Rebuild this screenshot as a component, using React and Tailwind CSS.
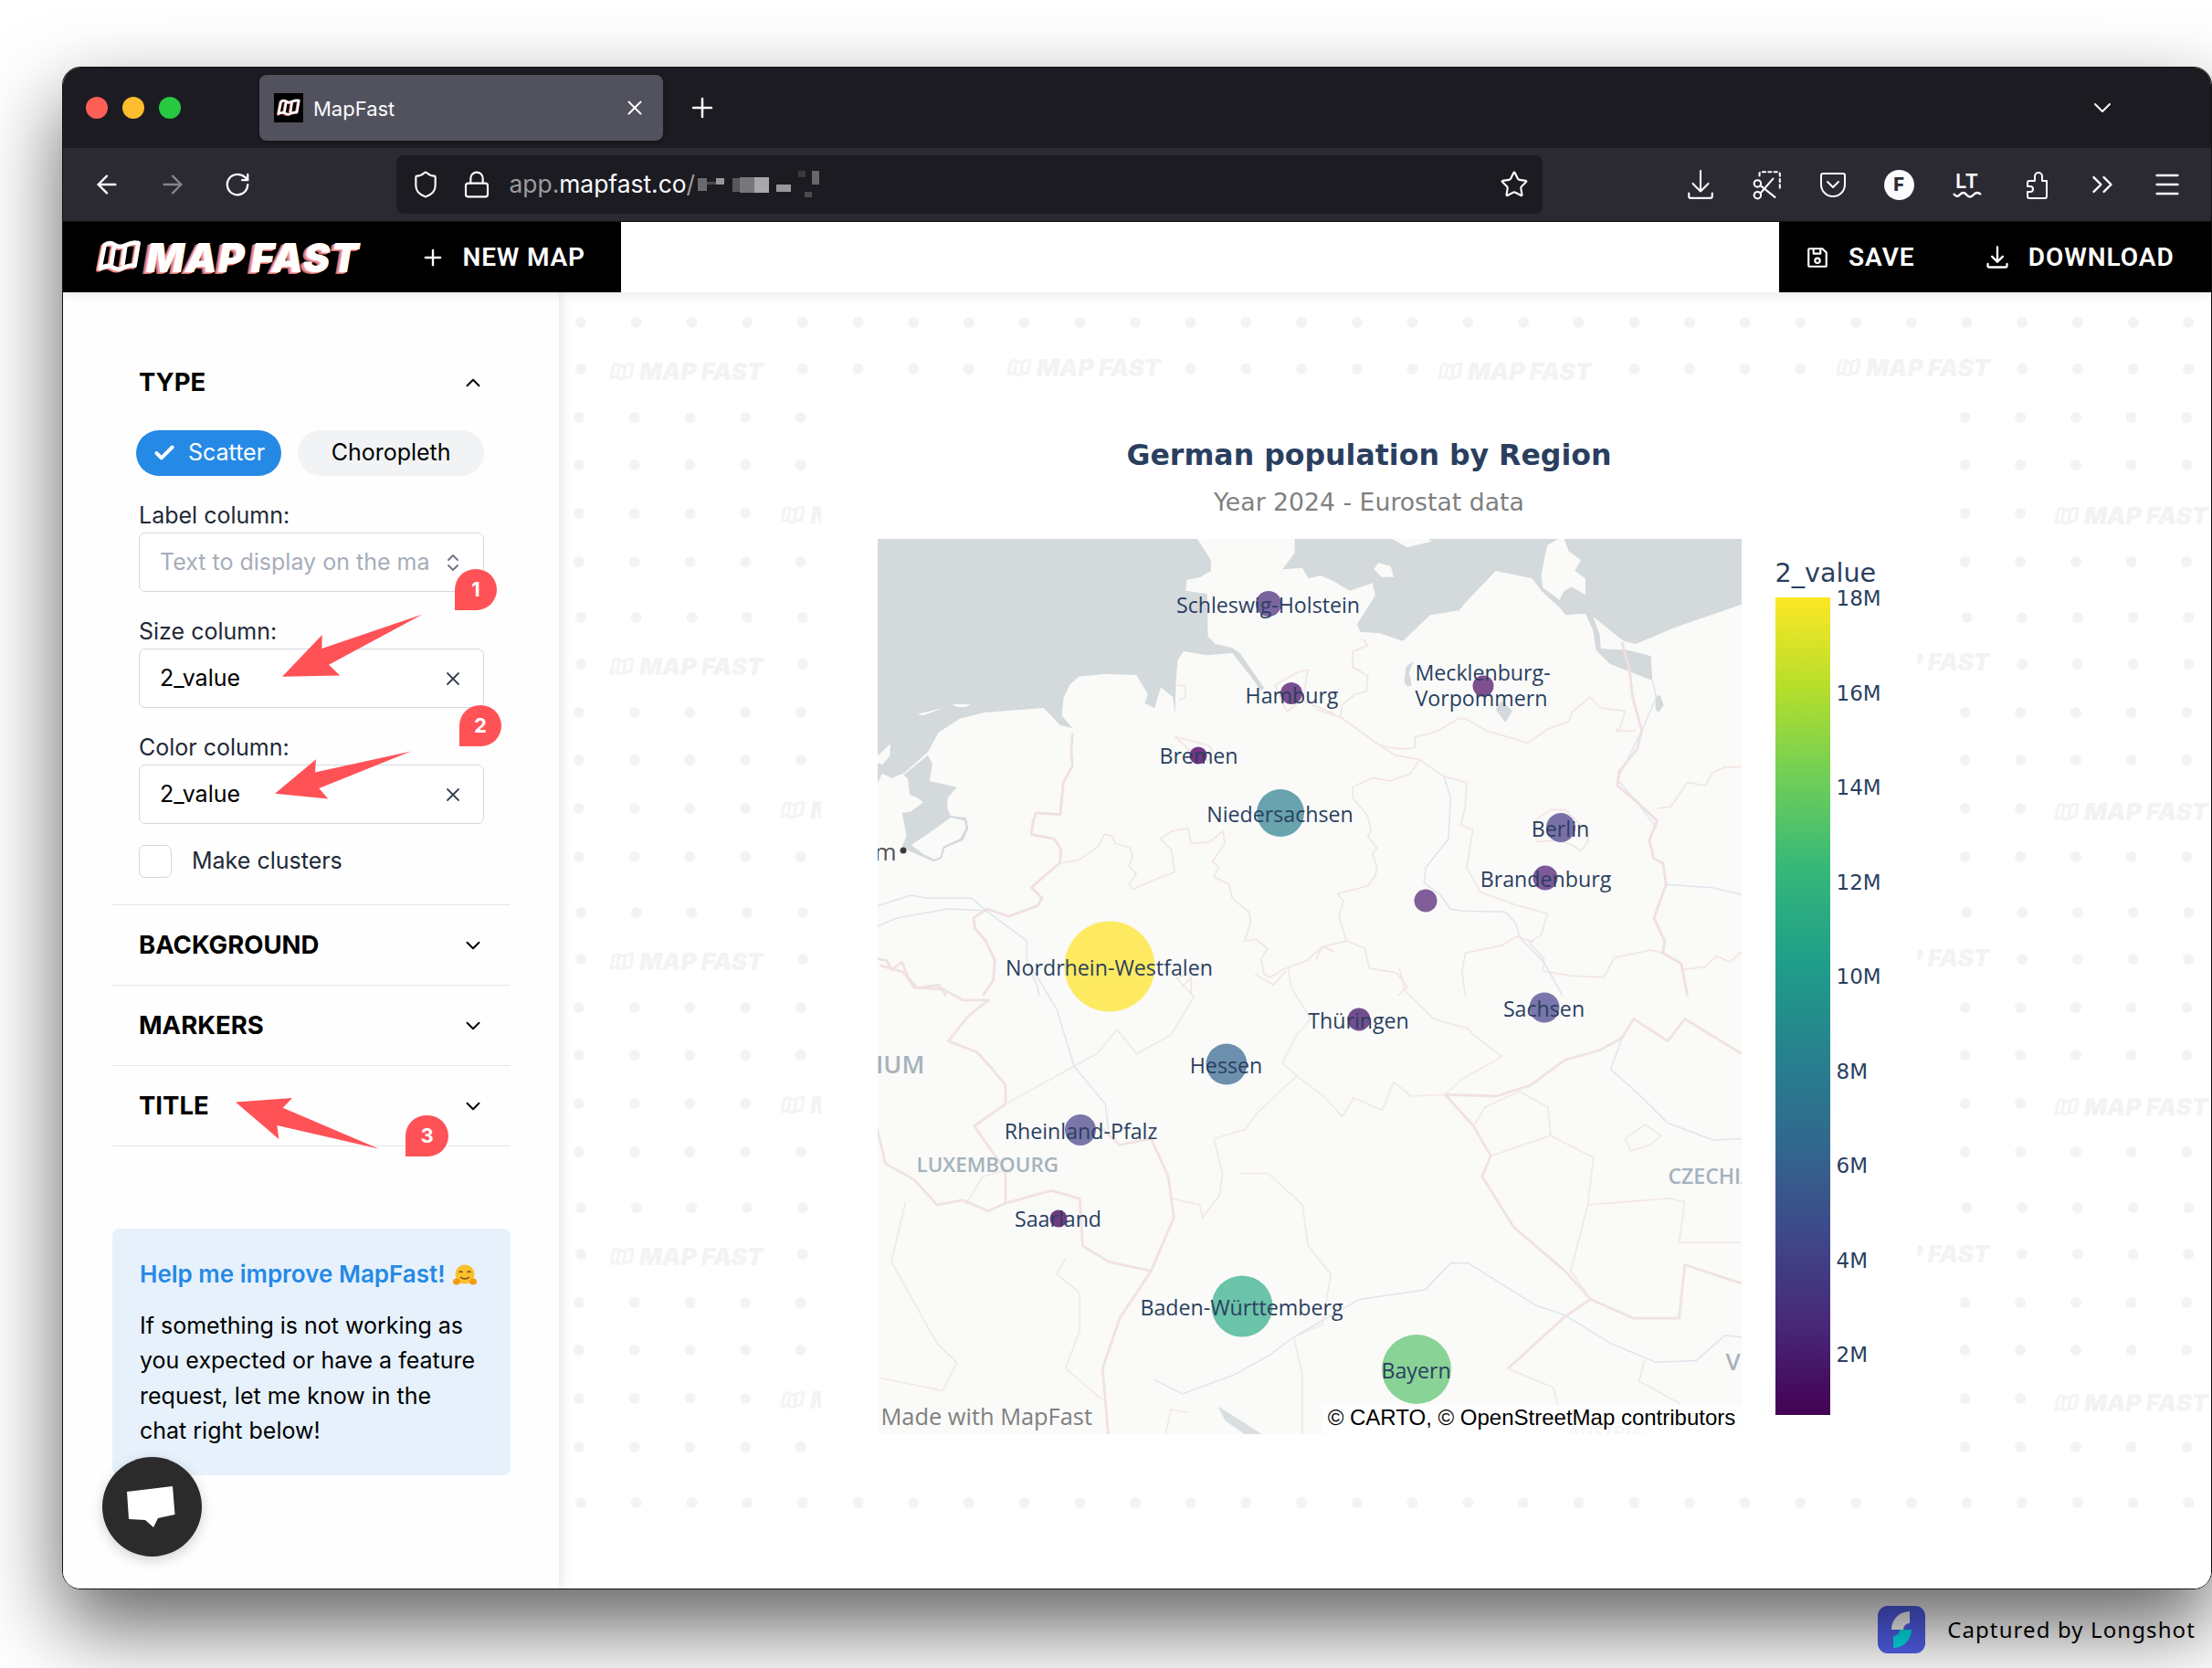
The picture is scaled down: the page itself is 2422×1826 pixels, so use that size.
import { useState } from 'react'
import { ArrowLeft, ArrowRight, RotateCw, Shield, Lock, Star, ChevronsRight, Menu, Plus, X, ChevronDown, ChevronUp, ChevronsUpDown, Check } from 'lucide-react'

const sea = '0,0 1050,0 1095,70 1095,105 1060,125 1015,135 1012,170 1082,180 1085,320 1110,345 1165,358 1190,375 1270,490 1258,498 1225,450 1165,375 1080,382 1005,368 985,400 980,470 977,575 970,520 930,487 910,555 877,540 888,510 850,447 750,443 660,452 630,480 610,525 605,580 640,622 600,612 545,555 350,570 270,590 200,635 165,700 85,770 45,785 15,770 0,800'
const seaLand = [
  '0,712 42,672 40,712 15,742 0,735',
  '130,575 215,555 150,580',
  '245,543 305,543 290,552 260,552',
  '110,1005 170,965 240,915 285,925 290,950 270,985 215,1010 205,1045 185,1052 150,1035',
]
const inland = '85,775 165,710 180,740 170,795 260,815 230,850 228,885 240,910 290,915 298,950 280,990 220,1015 210,1050 185,1060 150,1045 105,1025 80,1010 95,975 80,900 110,895 150,865 130,850 105,840 100,790'
const baltic = '-70,0 -70,45 -110,100 -45,95 -25,130 15,120 60,140 110,170 185,145 195,185 135,280 145,305 210,310 285,335 375,250 470,235 490,210 590,105 710,130 740,170 800,225 820,250 885,245 910,300 920,365 965,410 1105,465 1100,385 1025,365 935,360 932,315 910,255 1010,335 1050,345 1180,290 1398,215 1398,0'
const balticLand = [
  '250,0 300,28 380,8 370,0',
  '190,100 205,78 245,90 255,125 215,125',
  '760,20 795,0 815,0 830,40 870,70 850,105 885,130 885,183 840,158 815,170 800,200 745,160 740,120 750,65',
]
const lakes = [
  '295,420 320,402 305,440 315,480 300,485 290,470',
  '590,560 610,530 645,565 622,602',
  '1115,520 1130,512 1142,545 1125,570 1115,560',
]

const thin10 = [
  '598,1065 660,1055 725,1010 745,970 770,975 780,1000 830,1015 838,1045 825,1075 850,1100 825,1135 840,1150 920,1115 975,1095 965,1020 928,985 965,960 1020,950 1030,1000 1090,995 1135,960 1140,1000 1100,1060 1120,1075 1105,1110 1155,1135 1165,1180 1220,1225 1225,1260 1205,1320 1245,1315 1280,1345 1260,1380 1270,1430 1290,1440 1330,1415 1410,1385 1460,1340 1500,1355',
  '977,650 1020,660 1090,680 1100,700 1085,730 1040,710 1010,680 977,650',
  '985,480 1010,482 1012,520 990,530',
  '1305,480 1385,435 1413,430 1405,480 1395,530 1430,545 1500,575',
  '1305,480 1330,540 1345,565 1395,530',
  '1000,1470 1030,1440 1030,1500',
  '1240,1430 1300,1465 1340,1420',
]
const thick10 = [
  '640,638 636,700 640,745 610,800 600,905 520,900 510,930 505,970 580,985 603,1020 598,1065 550,1105 505,1145 540,1180 525,1205 430,1240 360,1215 315,1245 320,1280 355,1320 385,1385 380,1450 345,1500',
  '0,1380 30,1385 45,1415 80,1390 100,1440 130,1475 200,1465 225,1500',
]
const river10 = [
  '0,1205 110,1170 160,1180 310,1180 355,1220 490,1320 490,1390 525,1470 530,1500',
  '0,1272 65,1245 230,1215 355,1220',
]
const thin11 = [
  '0,560 80,585 205,675 260,710 340,725 420,780 495,800 490,880 475,940 515,955 495,1080 540,1160 650,1200 760,1230 740,1300 700,1325 750,1380 745,1420',
  '155,330 170,350 120,370 120,420 170,450 165,500 130,510 85,545 80,585',
  '205,675 240,685 285,690 325,685 325,650 370,640 400,630 470,590 490,590 560,630 630,650 695,670 760,625 830,600 840,570 900,520 935,555 1015,565 1000,620 985,630 1050,630',
  '340,725 310,770 245,795 185,785 120,815 120,850 170,910 180,960 170,975 200,1015 185,1035 200,1075 195,1105 170,1140 70,1165 90,1190 75,1240 100,1320 160,1345 175,1410 265,1425 300,1470 270,1500',
  '750,1420 840,1435 945,1440 980,1375 1100,1350 1140,1360',
  '1205,1415 1280,1405 1315,1370 1360,1390 1398,1355',
  '1120,885 1165,880 1220,800 1280,810 1300,770 1340,750 1398,748',
  '100,1320 20,1340 0,1380',
  '490,1360 610,1335 660,1305 715,1325',
  '490,1360 480,1420 490,1500',
  '725,920 770,890 820,890 890,960 895,990 870,1025 840,1005 790,990 725,995 720,960 725,920',
]
const thick11 = ['1005,340 1030,430 1040,520 1070,630 1055,690 995,765 990,810 1050,860 1120,925 1095,990 1110,1050 1140,1065 1150,1135 1110,1245 1145,1320 1140,1360 1200,1395 1220,1500']
const river11 = [
  '420,780 442,850 435,985 360,1080 355,1130 410,1170 440,1215 480,1222 620,1225 655,1260 670,1310 745,1385 810,1500',
  '1105,465 1118,520 1070,630 990,790 1050,860 1120,950',
  '1150,1135 1300,1145 1398,1168',
]
const thin6 = [
  '240,460 300,400 360,340 400,300 435,225 470,300 530,240 570,120 540,60 600,20',
  '750,370 725,330 750,240 775,190 740,90 735,30',
  '605,570 660,540 680,490 750,370 800,440 830,500 850,440 900,480 920,390 950,435 1010,430',
  '605,570 620,680 615,750 585,820 580,780 530,760',
  '650,680 700,680 760,780 770,910 810,1000 795,1160 745,1200 760,1320 760,1510',
  '1010,430 1040,380 1110,310 1060,240 1050,220 990,190 940,100 930,30',
  '1060,530 1080,470 1140,420 1190,470 1195,560 1090,625',
  '1195,560 1270,630 1260,780 1400,760 1430,770 1420,900 1450,900 1530,900',
  '1260,780 1230,990 1265,1080',
  '1325,570 1360,525 1388,560 1370,590 1335,608 1325,570',
  '65,770 40,960 120,1220 155,1280 130,1370 20,1330',
  '240,670 200,690 170,780',
  '345,950 330,1000 370,1060 370,1180 345,1300 410,1400',
  '560,1440 530,1430 520,1510',
  '1120,1300 1200,1360 1220,1510',
  '1360,1270 1350,1340 1420,1410 1440,1510',
]
const thick6 = [
  '15,540 30,650 80,700 120,780 165,765 210,800 240,775 320,735 370,760 375,910 420,960 495,990 535,820 525,690 495,570 440,590 410,540',
  '495,990 440,1140 410,1300 420,1510',
  '20,20 60,40 80,90 130,95 165,130 210,130 175,180 140,260 190,295 215,345 240,400 240,460 185,530 220,620 240,670 240,775',
  '1010,430 1030,470 1060,530 1090,625 1075,690 1130,850 1220,990 1265,1080 1220,1135 1120,1300',
  '1265,1080 1340,1140 1420,1140 1430,970 1530,1030',
  '1160,400 1220,320 1280,290 1320,250 1340,190 1400,260 1430,190 1530,300',
  '1010,430 1100,435 1160,400',
]
const river6 = [
  '500,1335 550,1380 640,1320 700,1260 745,1200 860,1080 975,1050 1020,965 1050,965 1170,1100 1220,1130 1300,1220 1380,1280 1450,1275 1500,1195 1530,1200',
  '1530,570 1480,575 1400,520 1350,430 1300,350 1320,250',
  '290,40 330,160 360,340 415,460 420,540',
]

const markers = [
  { x: 428, y: 71, d: 28, c: '#7b65a0' },
  { x: 663, y: 161, d: 23, c: '#7e5090' },
  { x: 453, y: 169, d: 24, c: '#7a4d90' },
  { x: 351, y: 237, d: 19, c: '#733683' },
  { x: 441, y: 300, d: 52, c: '#68a3ae' },
  { x: 748, y: 316, d: 32, c: '#7a70a8' },
  { x: 731, y: 371, d: 27, c: '#7d5a99' },
  { x: 600, y: 396, d: 25, c: '#7f5e99' },
  { x: 254, y: 468, d: 99, c: '#fdea61' },
  { x: 527, y: 526, d: 25, c: '#724e8c' },
  { x: 730, y: 513, d: 33, c: '#7876aa' },
  { x: 382, y: 575, d: 45, c: '#6c90ae' },
  { x: 222, y: 647, d: 34, c: '#7a76a8' },
  { x: 198, y: 744, d: 19, c: '#703a82' },
  { x: 399, y: 840, d: 67, c: '#6bc3a9' },
  { x: 590, y: 909, d: 76, c: '#88d395' },
]

const labels = [
  { x: 428, y: 72, t: 'Schleswig-Holstein' },
  { x: 454, y: 171, t: 'Hamburg' },
  { x: 352, y: 237, t: 'Bremen' },
  { x: 441, y: 301, t: 'Niedersachsen' },
  { x: 748, y: 317, t: 'Berlin' },
  { x: 732, y: 372, t: 'Brandenburg' },
  { x: 254, y: 469, t: 'Nordrhein-Westfalen' },
  { x: 527, y: 527, t: 'Thüringen' },
  { x: 730, y: 514, t: 'Sachsen' },
  { x: 382, y: 576, t: 'Hessen' },
  { x: 223, y: 648, t: 'Rheinland-Pfalz' },
  { x: 198, y: 744, t: 'Saarland' },
  { x: 399, y: 841, t: 'Baden-Württemberg' },
  { x: 590, y: 910, t: 'Bayern' },
]

const ticks = ['18M', '16M', '14M', '12M', '10M', '8M', '6M', '4M', '2M']

const mosaic = [
  [0, 8, 10, 14, '#6a6a6e'], [10, 12, 10, 3, '#4a4a4e'], [20, 8, 9, 7, '#98989c'], [38, 8, 8, 15, '#58585c'],
  [46, 7, 16, 17, '#77777b'], [62, 7, 16, 17, '#a8a8ac'], [86, 15, 16, 8, '#98989c'], [110, 0, 8, 7, '#3a3a3e'],
  [125, 0, 8, 15, '#68686c'], [117, 23, 8, 6, '#4a4a4e'],
]

// watermark spots, coords relative to the main panel
const marks = [
  { x: 55, y: 87 }, { x: 490, y: 83 }, { x: 962, y: 87 }, { x: 1398, y: 83 },
  { x: 55, y: 410 }, { x: 55, y: 733 }, { x: 55, y: 1056 },
  { x: 1398, y: 405 }, { x: 1398, y: 729 }, { x: 1398, y: 1053 },
  { x: 242, y: 244 }, { x: 242, y: 567 }, { x: 242, y: 890 }, { x: 242, y: 1213 },
  { x: 1637, y: 245 }, { x: 1637, y: 569 }, { x: 1637, y: 892 }, { x: 1637, y: 1216 },
]

function makeDots() {
  const out = []
  const rows = [[33, 24], [84, 24], [137, 22], [189, 22], [242, 22], [295, 22]]
  for (let k = 0; k < 5; k++) {
    rows.forEach(([y, x0]) => {
      const cy = y + k * 323
      for (let i = 0; i < 31; i++) {
        const cx = x0 + i * 60.7
        const hit = marks.some((m) => cx > m.x - 16 && cx < m.x + 190 && Math.abs(cy - m.y) < 24)
        if (!hit && cy < 1360) out.push([cx, cy])
      }
    })
  }
  return out
}
const dots = makeDots()

function LogoIcon({ className, color = '#fff', shadow = '#f08a8a' }) {
  const outline = 'M9 5 C13 2 17 3 20 5 C24 8 28 7 32 5 C36 3 41 2 45 3 L41 27 C36 26 31 28 27 30 C23 32 19 30 16 28 C12 26 8 28 4 30 Z'
  return (
    <svg viewBox="0 0 48 36" className={className} fill="none" strokeWidth="4.6" strokeLinejoin="round">
      <g stroke={shadow} transform="translate(-2 1.5)">
        <path d={outline} />
        <path d="M19 7 L16 26 M31 7 L28 27" />
      </g>
      <path d={outline} stroke={color} />
      <path d="M19 7 L16 26 M31 7 L28 27" stroke={color} />
    </svg>
  )
}

function Watermark({ x, y }) {
  return (
    <div className="absolute flex items-center gap-[5px] -translate-y-1/2" style={{ left: x, top: y }}>
      <LogoIcon className="w-[28px] h-[22px]" color="#f4f4f4" shadow="#f8f8f8" />
      <span className="font-['Inter'] italic font-black text-[26px] leading-[30px] text-[#f3f3f3] whitespace-nowrap">MAP FAST</span>
    </div>
  )
}

function Section({ title }) {
  return (
    <div className="h-[88px] pt-[1px] border-b-[1.5px] border-[#e4e5e7] flex items-center justify-between pl-[29px] pr-[28px]">
      <span className="text-[27.5px] font-bold text-black">{title}</span>
      <ChevronDown className="w-[26px] h-[26px] text-black" strokeWidth={1.8} />
    </div>
  )
}

function FieldLabel({ children }) {
  return <div className="mt-[25px] h-[37px] leading-[36px] text-[25px] text-[#1f2937]">{children}</div>
}

function ValueInput() {
  return (
    <div className="h-[65px] border-[1.5px] border-[#d3d7dd] rounded-[7px] flex items-center justify-between pl-[22px] pr-[21px] bg-white">
      <span className="text-[25px] text-black">2_value</span>
      <X className="w-[24px] h-[24px] text-[#374151]" strokeWidth={1.8} />
    </div>
  )
}

function HugEmoji() {
  return (
    <svg viewBox="0 0 26 24" className="inline-block w-[26px] h-[24px] ml-[8px] align-[-4px]">
      <circle cx="13" cy="11" r="10.5" fill="#fbc02d" />
      <path d="M6.5 9 q2 -2.5 4 0 M15.5 9 q2 -2.5 4 0" stroke="#7a4a12" strokeWidth="1.4" fill="none" />
      <path d="M8 14 q5 4 10 0" stroke="#7a4a12" strokeWidth="1.4" fill="none" />
      <ellipse cx="4" cy="19" rx="4" ry="3.5" fill="#f39c12" />
      <ellipse cx="22" cy="19" rx="4" ry="3.5" fill="#f39c12" />
    </svg>
  )
}

function Polys({ items, stroke, width }) {
  return items.map((p, i) => (
    <polyline key={i} points={p} fill="none" stroke={stroke} strokeWidth={width} strokeLinejoin="round" vectorEffect="non-scaling-stroke" />
  ))
}

function ToolIcon({ children, className }) {
  return (
    <svg viewBox="0 0 32 32" className={className} fill="none" stroke="#fbfbfe" strokeWidth="2" strokeLinecap="round" strokeLinejoin="round">
      {children}
    </svg>
  )
}

function Map() {
  return (
    <div className="relative w-[946px] h-[980px] overflow-hidden bg-[#fafaf8] shrink-0 font-['Open_Sans']">
      <svg viewBox="0 0 946 980" className="absolute inset-0 w-full h-full">
        <g transform="scale(0.3333)">
          <polygon points={sea} fill="#d4d9dc" />
          <polygon points={inland} fill="#d4d9dc" />
          {seaLand.map((p, i) => <polygon key={i} points={p} fill="#fafaf8" />)}
          <Polys items={river10} stroke="#dde6eb" width={1.5} />
          <Polys items={thin10} stroke="#f2e4e4" width={1.6} />
          <Polys items={thick10} stroke="#f0e0e0" width={2.8} />
        </g>
        <g transform="translate(480 0) scale(0.3333)">
          <polygon points={baltic} fill="#d4d9dc" />
          {balticLand.map((p, i) => <polygon key={i} points={p} fill="#fafaf8" />)}
          {lakes.map((p, i) => <polygon key={i} points={p} fill="#d4d9dc" />)}
          <Polys items={river11} stroke="#dde6eb" width={1.5} />
          <Polys items={thin11} stroke="#f2e4e4" width={1.6} />
          <Polys items={thick11} stroke="#f0e0e0" width={2.8} />
        </g>
        <g transform="translate(-10 460) scale(0.625 0.3448)">
          <polygon points="612,1420 665,1480 690,1510 660,1510 625,1465" fill="#d9dee0" />
          <Polys items={river6} stroke="#dde6eb" width={1.5} />
          <Polys items={thin6} stroke="#f3e7e7" width={1.6} />
          <Polys items={thick6} stroke="#f1e2e2" width={2.8} />
        </g>
        <circle cx="28" cy="341" r="3.5" fill="#3a3a3a" />
        {markers.map((m, i) => <circle key={i} cx={m.x} cy={m.y} r={m.d / 2} fill={m.c} />)}
      </svg>

      <span className="absolute left-[-3px] top-[325px] text-[26px] leading-[34px] text-[#555]">m</span>
      <span className="absolute left-[-21px] top-[558px] text-[27px] leading-[34px] font-semibold text-[#a5b2bc]">GIUM</span>
      <span className="absolute left-[43px] top-[670px] text-[22.4px] leading-[30px] font-semibold text-[#a5b2bc]">LUXEMBOURG</span>
      <span className="absolute left-[866px] top-[682px] text-[23px] leading-[30px] font-semibold text-[#a5b2bc]">CZECHIA</span>
      <span className="absolute left-[929px] top-[883px] text-[26px] leading-[34px] font-semibold text-[#a5b2bc]">V</span>
      <span className="absolute left-[756px] top-[966px] text-[20px] leading-[24px] font-semibold text-[#c5ced6]">AUSTRIA</span>

      {labels.map((l) => (
        <div key={l.t} className="absolute -translate-x-1/2 -translate-y-1/2 whitespace-nowrap text-[23.2px] leading-[28px] text-[#2a3f5f]" style={{ left: l.x, top: l.y }}>
          {l.t}
        </div>
      ))}
      <div className="absolute left-[663px] top-[160px] -translate-x-1/2 -translate-y-1/2 text-left text-[23.2px] leading-[28px] text-[#2a3f5f]">
        Mecklenburg-<br />Vorpommern
      </div>

      <span className="absolute left-[4px] top-[945px] text-[25.4px] leading-[30px] text-[#7f7f7f]">Made with MapFast</span>
      <div className="absolute right-0 bottom-0 w-[459px] h-[32px] pb-[4px] bg-white/80 flex items-center justify-center font-['Liberation_Sans'] text-[24px] text-black whitespace-nowrap">
        © CARTO, © OpenStreetMap contributors
      </div>
    </div>
  )
}

export default function App() {
  const [type] = useState('scatter')

  return (
    <div className="relative w-[2422px] h-[1826px] overflow-hidden bg-white pt-[73px] pl-[68px] font-['Inter',sans-serif]">
      <div className="relative isolate w-[2354px] h-[1667px] rounded-[20px] overflow-hidden flex flex-col border-[1.5px] border-[#111] shadow-[0_40px_90px_rgba(0,0,0,0.62)]">
        {/* tab strip */}
        <div className="h-[88px] shrink-0 bg-[#1c1b22] flex items-center pl-[25px] pr-[103px]">
          <div className="flex gap-[16px] w-[190px]">
            <span className="w-[24px] h-[24px] rounded-full bg-[#ff5f57]" />
            <span className="w-[24px] h-[24px] rounded-full bg-[#febc2e]" />
            <span className="w-[24px] h-[24px] rounded-full bg-[#28c840]" />
          </div>
          <div className="w-[442px] h-[72px] bg-[#52525e] rounded-[8px] flex items-center pl-[16px] pr-[18px] shadow-[0_1px_4px_rgba(0,0,0,0.4)]">
            <div className="w-[32px] h-[32px] bg-black flex items-center justify-center">
              <LogoIcon className="w-[26px] h-[22px]" />
            </div>
            <span className="ml-[11px] pt-[2px] text-[22px] text-[#fbfbfe]">MapFast</span>
            <X className="ml-auto w-[26px] h-[26px] text-[#fbfbfe]" strokeWidth={1.8} />
          </div>
          <Plus className="ml-[26px] w-[34px] h-[34px] text-[#fbfbfe]" strokeWidth={1.8} />
          <ChevronDown className="ml-auto w-[32px] h-[32px] text-[#fbfbfe]" strokeWidth={1.5} />
        </div>

        {/* browser toolbar */}
        <div className="h-[81px] shrink-0 bg-[#2b2a33] border-b border-[#111] flex items-center pl-[32px]">
          <ArrowLeft className="w-[32px] h-[32px] text-[#fbfbfe]" strokeWidth={1.8} />
          <ArrowRight className="ml-[40px] w-[32px] h-[32px] text-[#85848b]" strokeWidth={1.8} />
          <RotateCw className="ml-[40px] w-[30px] h-[30px] text-[#fbfbfe]" strokeWidth={1.8} />
          <div className="ml-[158.5px] w-[1255px] h-[64px] rounded-[8px] bg-[#1c1b22] flex items-center pl-[16px] pr-[15px]">
            <Shield className="w-[32px] h-[32px] text-[#fbfbfe]" strokeWidth={1.6} />
            <Lock className="ml-[24px] w-[32px] h-[32px] text-[#fbfbfe]" strokeWidth={1.6} />
            <span className="ml-[20px] text-[26.4px] text-[#fbfbfe] whitespace-nowrap">
              <span className="text-[#9b9ba0]">app.</span>mapfast.co<span className="text-[#9b9ba0]">/</span>
            </span>
            <svg viewBox="0 0 134 30" className="w-[134px] h-[30px] ml-[3px]">
              {mosaic.map(([x, y, w, h, c], i) => <rect key={i} x={x} y={y} width={w} height={h} fill={c} />)}
            </svg>
            <Star className="ml-auto w-[32px] h-[32px] text-[#fbfbfe]" strokeWidth={1.6} />
          </div>
          <div className="flex items-center ml-[156px]">
            <ToolIcon className="w-[34px] h-[34px]">
              <path d="M16 2 V23 M8 15 L16 23 L24 15 M4 25 V28 a2 2 0 0 0 2 2 H26 a2 2 0 0 0 2 -2 V25" />
            </ToolIcon>
            <ToolIcon className="ml-[39px] w-[34px] h-[34px]">
              <path d="M8 7 V5 a2 2 0 0 1 2 -2 H27 a2 2 0 0 1 2 2 V19 a2 2 0 0 1 -2 2" strokeDasharray="3 3" />
              <circle cx="6" cy="15" r="3.5" />
              <circle cx="6" cy="27" r="3.5" />
              <path d="M9 17 L24 29 M9 25 L22 10" />
            </ToolIcon>
            <ToolIcon className="ml-[39px] w-[32px] h-[34px]">
              <path d="M5 4 H27 a2 2 0 0 1 2 2 V16 a13 13 0 0 1 -26 0 V6 a2 2 0 0 1 2 -2 Z M10 13 L16 19 L22 13" />
            </ToolIcon>
            <div className="ml-[40px] w-[33px] h-[33px] rounded-full bg-[#fbfbfe] flex items-center justify-center text-[20px] font-extrabold text-[#2b2a33]">F</div>
            <div className="ml-[42px] flex flex-col items-center w-[32px]">
              <span className="text-[22px] leading-[21px] font-semibold text-[#fbfbfe]">LT</span>
              <svg viewBox="0 0 32 8" className="w-[32px] h-[8px]" fill="none" stroke="#fbfbfe" strokeWidth="2.4">
                <path d="M1 3 q4 5 7 1 q4 -4 7 0 q4 5 8 0 q4 -4 8 0" />
              </svg>
            </div>
            <ToolIcon className="ml-[47px] w-[32px] h-[36px]">
              <path d="M11 7 a4 4 0 0 1 8 0 V12 h5 V29 a2 2 0 0 1 -2 2 H5 a2 2 0 0 1 -2 -2 V24 h3 a3 3 0 0 0 0 -6 H3 V14 a2 2 0 0 1 2 -2 h6 Z" />
            </ToolIcon>
            <ChevronsRight className="ml-[34px] w-[38px] h-[38px] text-[#fbfbfe]" strokeWidth={1.5} />
            <Menu className="ml-[35px] w-[34px] h-[34px] text-[#fbfbfe]" strokeWidth={1.8} />
          </div>
        </div>

        {/* app header */}
        <div className="relative z-20 h-[77px] shrink-0 bg-white flex justify-between shadow-[0_2px_12px_rgba(0,0,0,0.1)] font-['Roboto']">
          <div className="w-[611px] bg-black flex items-center pl-[36px]">
            <LogoIcon className="w-[50px] h-[37px]" />
            <span className="ml-[5px] font-['Inter'] text-[44px] leading-[50px] italic font-black text-white whitespace-nowrap tracking-[1px] [word-spacing:-4px] [text-shadow:-2px_1px_0_#f4a0a0,-4px_2px_0_#d46a6a]">MAP FAST</span>
            <Plus className="ml-[66px] w-[28px] h-[28px] text-white" strokeWidth={2} />
            <span className="ml-[19px] text-[28px] font-semibold text-white tracking-[0.8px] whitespace-nowrap">NEW MAP</span>
          </div>
          <div className="w-[473px] bg-black flex items-center pl-[29px]">
            <svg viewBox="0 0 24 24" className="w-[26px] h-[26px]" fill="none" stroke="#fff" strokeWidth="2" strokeLinejoin="round">
              <path d="M4 3 H17 L21 7 V20 a1 1 0 0 1 -1 1 H4 a1 1 0 0 1 -1 -1 V4 a1 1 0 0 1 1 -1 Z M8 3 V8 H15 V3" />
              <circle cx="12" cy="15" r="2.5" />
            </svg>
            <span className="ml-[21px] text-[28px] font-semibold text-white tracking-[1px]">SAVE</span>
            <svg viewBox="0 0 24 24" className="ml-[76px] w-[28px] h-[28px]" fill="none" stroke="#fff" strokeWidth="2" strokeLinecap="round" strokeLinejoin="round">
              <path d="M12 2 V16 M7 11 L12 16 L17 11 M3 18 V20 a1 1 0 0 0 1 1 H20 a1 1 0 0 0 1 -1 V18" />
            </svg>
            <span className="ml-[20px] text-[28px] font-semibold text-white tracking-[1px]">DOWNLOAD</span>
          </div>
        </div>

        <div className="flex-1 flex min-h-0">
          {/* sidebar */}
          <div className="relative z-10 w-[543px] shrink-0 bg-[#fefefe] pl-[54px] pr-[53px] pt-[55px] shadow-[0_0_14px_rgba(0,0,0,0.14)]">
            <div className="border-b-[1.5px] border-[#e4e5e7] pb-[28px]">
              <div className="h-[88px] flex items-center justify-between pl-[29px] pr-[28px]">
                <span className="text-[27.5px] font-bold text-black">TYPE</span>
                <ChevronUp className="w-[26px] h-[26px] text-black" strokeWidth={1.8} />
              </div>
              <div className="pl-[29px] pr-[29px]">
                <div className="mt-[8px] -ml-[3px] flex gap-[18px]">
                  <div className={`h-[50px] w-[160px] rounded-full flex items-center pl-[18px] gap-[13px] text-[25px] ${type === 'scatter' ? 'bg-[#2589e6] text-white' : 'bg-[#f2f3f5] text-black'}`}>
                    <Check className="w-[26px] h-[26px]" strokeWidth={3.6} />
                    Scatter
                  </div>
                  <div className="h-[50px] w-[205px] rounded-full bg-[#f2f3f5] flex items-center justify-center text-[25px] text-black">Choropleth</div>
                </div>
                <FieldLabel>Label column:</FieldLabel>
                <div className="h-[65px] border-[1.5px] border-[#d3d7dd] rounded-[7px] flex items-center justify-between pl-[22px] pr-[21px] bg-white">
                  <span className="text-[25px] text-[#a6aeb9] whitespace-nowrap">Text to display on the ma</span>
                  <ChevronsUpDown className="w-[24px] h-[24px] text-[#6b7280]" strokeWidth={1.8} />
                </div>
                <FieldLabel>Size column:</FieldLabel>
                <ValueInput />
                <FieldLabel>Color column:</FieldLabel>
                <ValueInput />
                <div className="mt-[22px] flex items-center gap-[22px]">
                  <span className="w-[36px] h-[36px] rounded-[7px] border-[1.5px] border-[#d3d7dd] bg-white" />
                  <span className="text-[25px] text-[#1f2937]">Make clusters</span>
                </div>
              </div>
            </div>
            <Section title="BACKGROUND" />
            <Section title="MARKERS" />
            <Section title="TITLE" />

            <div className="mt-[90px] rounded-[8px] bg-[#e6f1fc] pl-[30px] pr-[34px] pt-[32px] pb-[29px]">
              <div className="text-[26px] leading-[36px] font-semibold text-[#2589e6] whitespace-nowrap">
                Help me improve MapFast!<HugEmoji />
              </div>
              <p className="mt-[19px] text-[25px] leading-[38.5px] text-black">
                If something is not working as you expected or have a feature request, let me know in the chat right below!
              </p>
            </div>

            <button className="absolute left-[43px] bottom-[35px] w-[109px] h-[109px] rounded-full bg-[#2b2b2b] flex items-center justify-center shadow-[0_4px_14px_rgba(0,0,0,0.18)]">
              <svg viewBox="0 0 53 45" className="w-[53px] h-[45px] -ml-[3px]">
                <polygon points="0,6 50,0 52.5,31 34,35 29,45 20,37 2,36" fill="#fff" />
              </svg>
            </button>
          </div>

          {/* main panel */}
          <div className="relative flex-1 bg-white pl-[287px] pt-[110px] overflow-hidden">
            <svg className="absolute inset-0 w-full h-full">
              {dots.map(([x, y], i) => <circle key={i} cx={x} cy={y} r="6" fill="#f3f3f3" />)}
            </svg>
            {marks.map((m, i) => <Watermark key={i} x={m.x} y={m.y} />)}

            <div className="relative w-[1200px] h-[1200px] bg-white pt-[48px]">
              <div className="text-center font-['DejaVu_Sans'] font-bold text-[31.6px] leading-[40px] text-[#2a3f5f]">German population by Region</div>
              <div className="mt-[14px] text-center font-['DejaVu_Sans'] text-[26.7px] leading-[36px] text-[#7f7f7f]">Year 2024 - Eurostat data</div>
              <div className="mt-[22px] ml-[61.5px] flex">
                <Map />
                <div className="ml-[37px] font-['DejaVu_Sans'] text-[#2a3f5f]">
                  <div className="mt-[23px] h-[41px] text-[28.6px] leading-[28px]">2_value</div>
                  <div className="flex">
                    <div className="w-[60px] h-[895px] bg-[linear-gradient(to_bottom,#fde725,#b5de2b,#6ece58,#35b779,#1f9e89,#26828e,#31688e,#3e4989,#482878,#440154)]" />
                    <div className="ml-[7px] -mt-[13px]">
                      {ticks.map((t) => (
                        <div key={t} className="h-[103.5px] text-[23px] leading-[28px]">{t}</div>
                      ))}
                    </div>
                  </div>
                </div>
              </div>
            </div>
          </div>
        </div>
      </div>

      <div className="flex justify-end items-center gap-[24px] pr-[18px] mt-[18px]">
        <svg viewBox="0 0 52 52" className="w-[52px] h-[52px]">
          <rect width="52" height="52" rx="11" fill="#5260ee" />
          <path d="M35 6 V19 A7 7 0 0 0 28 26 H15 A20 20 0 0 1 35 6 Z" fill="#fff" />
          <path d="M37 26 A20 20 0 0 1 17 46 V33 A7 7 0 0 0 24 26 Z" fill="#00e5ea" />
        </svg>
        <span className="text-[24px] tracking-[1.1px] text-black font-['Noto_Sans']">Captured by Longshot</span>
      </div>

      {/* annotations drawn on top of the screenshot */}
      <svg className="absolute left-0 top-0 w-[2422px] h-[1826px] pointer-events-none" viewBox="0 0 2422 1826">
        <polygon points="462.7,672.4 352.3,709.9 352.7,694.9 309,740.8 372.3,739.6 360,727.7" fill="#ff5257" />
        <polygon points="450,822.6 345,845.5 346,831.3 301,868.8 359.3,874.4 349.3,862.9" fill="#ff5257" />
        <polygon points="415.2,1257.8 309.7,1212.7 320,1202 257.9,1206.4 305.3,1247.1 303.4,1232" fill="#ff5257" />
      </svg>
      <div className="absolute left-[498px] top-[623px] w-[46px] h-[45px] rounded-full rounded-bl-none bg-[#ff5257] flex items-center justify-center text-[22px] font-bold text-white">1</div>
      <div className="absolute left-[503px] top-[772px] w-[46px] h-[45px] rounded-full rounded-bl-none bg-[#ff5257] flex items-center justify-center text-[22px] font-bold text-white">2</div>
      <div className="absolute left-[444px] top-[1221px] w-[47px] h-[45px] rounded-full rounded-bl-none bg-[#ff5257] flex items-center justify-center text-[22px] font-bold text-white">3</div>
    </div>
  )
}
